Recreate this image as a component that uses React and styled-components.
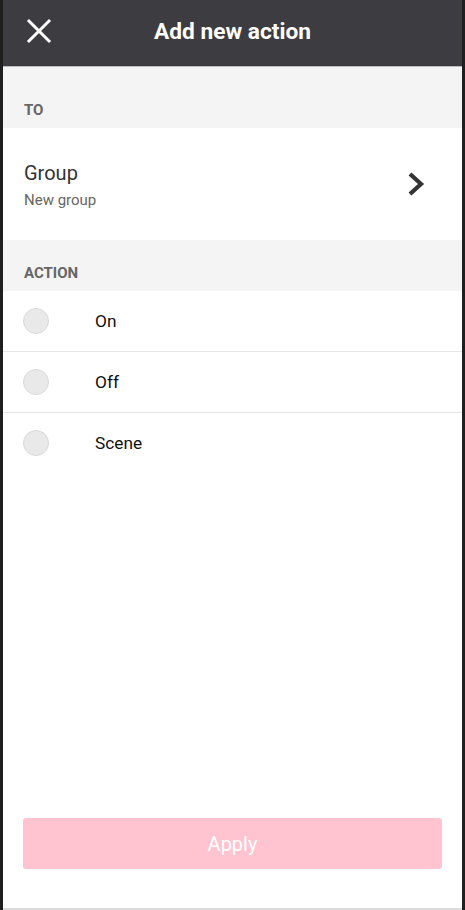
import React from "react";
import styled, { createGlobalStyle } from "styled-components";

const Global = createGlobalStyle`
  html, body { margin: 0; padding: 0; background: #1f1f1f; }
  body { font-family: Roboto, "Noto Sans", sans-serif; }
  * { box-sizing: border-box; }
`;

const Screen = styled.div`
  margin: 0 3px;
  height: 910px;
  background: #ffffff;
  display: flex;
  flex-direction: column;
  border-bottom: 2px solid #dcdcdc;
`;

const Header = styled.header`
  height: 67px;
  background: #3d3c41;
  border-bottom: 1px solid #bdbdbf;
  display: flex;
  align-items: center;
  justify-content: center;
  position: relative;
`;

const CloseButton = styled.button`
  position: absolute;
  left: 21px;
  top: 16px;
  width: 30px;
  height: 30px;
  padding: 0;
  border: 0;
  background: transparent;
  display: flex;
  align-items: center;
  justify-content: center;
`;

const Title = styled.h1`
  margin: 0;
  color: #ffffff;
  font-size: 22.7px;
  font-weight: 700;
  margin-top: -3px;
`;

const SectionLabel = styled.div`
  height: ${(p) => p.$h}px;
  background: #f4f4f4;
  display: flex;
  align-items: flex-end;
  padding: 0 21px 9px;
  color: #666666;
  font-size: 15px;
  font-weight: 700;
`;

const TargetRow = styled.div`
  height: 112px;
  display: flex;
  align-items: center;
  justify-content: space-between;
  padding: 0 36px 0 21px;
`;

const TargetText = styled.div`
  display: flex;
  flex-direction: column;
  margin-top: 2px;
`;

const TargetTitle = styled.div`
  color: #333333;
  font-size: 20px;
  line-height: 26px;
`;

const TargetSub = styled.div`
  color: #666666;
  font-size: 15px;
  line-height: 22px;
  margin-top: 3px;
`;

const OptionRow = styled.label`
  height: 61px;
  display: flex;
  align-items: center;
  padding-left: 20px;
  border-bottom: 1px solid ${(p) => (p.$last ? "transparent" : "#e6e6e6")};
`;

const Radio = styled.span`
  width: 26px;
  height: 26px;
  border-radius: 50%;
  background: #e9e9e9;
  border: 1px solid #d9d9d9;
  flex: none;
`;

const OptionLabel = styled.span`
  margin-left: 46px;
  color: #111111;
  font-size: 17.3px;
`;

const Spacer = styled.div`
  flex: 1;
`;

const Footer = styled.div`
  padding: 0 20px 39px;
`;

const ApplyButton = styled.button`
  width: 100%;
  height: 51px;
  border: 0;
  border-radius: 3px;
  background: #ffc4cf;
  color: #ffffff;
  font-family: Roboto, "Noto Sans", sans-serif;
  font-size: 20px;
`;

export default function App() {
  const options = ["On", "Off", "Scene"];
  return (
    <>
      <Global />
      <Screen>
        <Header>
          <CloseButton aria-label="Close">
            <svg width="26" height="26" viewBox="0 0 26 26">
              <path d="M3 3 L23 23 M23 3 L3 23" stroke="#fff" strokeWidth="3" strokeLinecap="square" />
            </svg>
          </CloseButton>
          <Title>Add new action</Title>
        </Header>
        <SectionLabel $h={61}>TO</SectionLabel>
        <TargetRow>
          <TargetText>
            <TargetTitle>Group</TargetTitle>
            <TargetSub>New group</TargetSub>
          </TargetText>
          <svg width="20" height="26" viewBox="0 0 20 26">
            <path d="M4 3 L15 13 L4 23" fill="none" stroke="#333" strokeWidth="4.2" strokeLinejoin="miter" />
          </svg>
        </TargetRow>
        <SectionLabel $h={51}>ACTION</SectionLabel>
        {options.map((o, i) => (
          <OptionRow key={o} $last={i === options.length - 1}>
            <Radio />
            <OptionLabel>{o}</OptionLabel>
          </OptionRow>
        ))}
        <Spacer />
        <Footer>
          <ApplyButton>Apply</ApplyButton>
        </Footer>
      </Screen>
    </>
  );
}
